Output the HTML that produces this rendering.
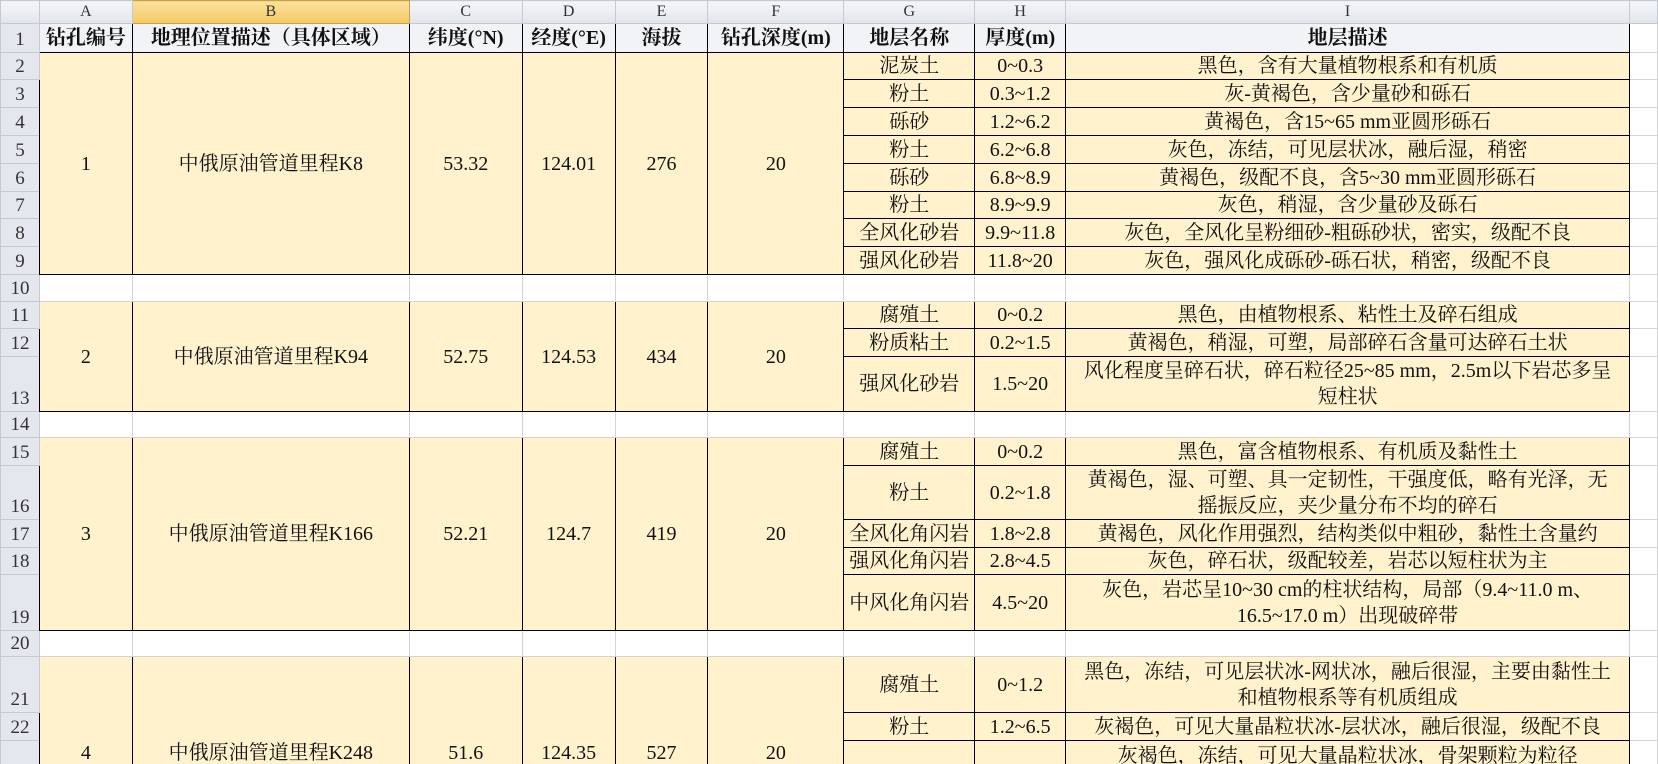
<!DOCTYPE html>
<html style="overflow:hidden;height:764px"><head><meta charset="utf-8"><style>
html,body{margin:0;width:1658px;height:764px;overflow:hidden;background:#fff;font-family:"Liberation Serif","Noto Serif CJK SC",serif;}
#wrap{position:relative;width:1658px;height:764px;overflow:hidden;}
table{border-collapse:collapse;table-layout:fixed;position:absolute;left:0;top:0;}
td{padding:0;text-align:center;vertical-align:middle;font-size:20px;color:#111;white-space:nowrap;overflow:hidden;line-height:26px;border:1px solid #d4d4d4;}
td.ch{background:linear-gradient(#f4f6f9,#e1e5eb);border:1px solid #c5cad2;color:#333;font-size:16px;line-height:18px;}
td.chs{background:linear-gradient(#fbe3a0,#f5c862);border:1px solid #c9a04a;color:#333;font-size:16px;line-height:18px;}
td.rh{background:#e4e8ee;border:1px solid #c5cad2;color:#333;font-size:19px;vertical-align:bottom;line-height:24px;}
td.h{background:#f2f3f6;font-weight:bold;border:1px solid #000;}
td.d{background:#fff2cc;border:1px solid #000;}
td.e{background:#fff;}
</style></head><body><div id="wrap">
<table>
<colgroup><col style="width:39px"><col style="width:93px"><col style="width:277px"><col style="width:113px"><col style="width:93px"><col style="width:93px"><col style="width:136px"><col style="width:131px"><col style="width:91px"><col style="width:564px"><col style="width:28px"></colgroup>
<tr style="height:23px"><td class="ch"></td><td class="ch">A</td><td class="chs">B</td><td class="ch">C</td><td class="ch">D</td><td class="ch">E</td><td class="ch">F</td><td class="ch">G</td><td class="ch">H</td><td class="ch">I</td><td class="ch"></td></tr>
<tr style="height:29px"><td class="rh">1</td><td class="h">钻孔编号</td><td class="h">地理位置描述（具体区域）</td><td class="h">纬度(°N)</td><td class="h">经度(°E)</td><td class="h">海拔</td><td class="h">钻孔深度(m)</td><td class="h">地层名称</td><td class="h">厚度(m)</td><td class="h">地层描述</td><td class="e"></td></tr>
<tr style="height:27px"><td class="rh">2</td><td class="d" rowspan="8">1</td><td class="d" rowspan="8">中俄原油管道里程K8</td><td class="d" rowspan="8">53.32</td><td class="d" rowspan="8">124.01</td><td class="d" rowspan="8">276</td><td class="d" rowspan="8">20</td><td class="d">泥炭土</td><td class="d">0~0.3</td><td class="d">黑色，含有大量植物根系和有机质</td><td class="e"></td></tr>
<tr style="height:28px"><td class="rh">3</td><td class="d">粉土</td><td class="d">0.3~1.2</td><td class="d">灰-黄褐色，含少量砂和砾石</td><td class="e"></td></tr>
<tr style="height:28px"><td class="rh">4</td><td class="d">砾砂</td><td class="d">1.2~6.2</td><td class="d">黄褐色，含15~65 mm亚圆形砾石</td><td class="e"></td></tr>
<tr style="height:28px"><td class="rh">5</td><td class="d">粉土</td><td class="d">6.2~6.8</td><td class="d">灰色，冻结，可见层状冰，融后湿，稍密</td><td class="e"></td></tr>
<tr style="height:28px"><td class="rh">6</td><td class="d">砾砂</td><td class="d">6.8~8.9</td><td class="d">黄褐色，级配不良，含5~30 mm亚圆形砾石</td><td class="e"></td></tr>
<tr style="height:27px"><td class="rh">7</td><td class="d">粉土</td><td class="d">8.9~9.9</td><td class="d">灰色，稍湿，含少量砂及砾石</td><td class="e"></td></tr>
<tr style="height:28px"><td class="rh">8</td><td class="d">全风化砂岩</td><td class="d">9.9~11.8</td><td class="d">灰色，全风化呈粉细砂-粗砾砂状，密实，级配不良</td><td class="e"></td></tr>
<tr style="height:28px"><td class="rh">9</td><td class="d">强风化砂岩</td><td class="d">11.8~20</td><td class="d">灰色，强风化成砾砂-砾石状，稍密，级配不良</td><td class="e"></td></tr>
<tr style="height:27px"><td class="rh">10</td><td class="e"></td><td class="e"></td><td class="e"></td><td class="e"></td><td class="e"></td><td class="e"></td><td class="e"></td><td class="e"></td><td class="e"></td><td class="e"></td></tr>
<tr style="height:27px"><td class="rh">11</td><td class="d" rowspan="3">2</td><td class="d" rowspan="3">中俄原油管道里程K94</td><td class="d" rowspan="3">52.75</td><td class="d" rowspan="3">124.53</td><td class="d" rowspan="3">434</td><td class="d" rowspan="3">20</td><td class="d">腐殖土</td><td class="d">0~0.2</td><td class="d">黑色，由植物根系、粘性土及碎石组成</td><td class="e"></td></tr>
<tr style="height:28px"><td class="rh">12</td><td class="d">粉质粘土</td><td class="d">0.2~1.5</td><td class="d">黄褐色，稍湿，可塑，局部碎石含量可达碎石土状</td><td class="e"></td></tr>
<tr style="height:55px"><td class="rh">13</td><td class="d">强风化砂岩</td><td class="d">1.5~20</td><td class="d">风化程度呈碎石状，碎石粒径25~85 mm，2.5m以下岩芯多呈<br>短柱状</td><td class="e"></td></tr>
<tr style="height:26px"><td class="rh">14</td><td class="e"></td><td class="e"></td><td class="e"></td><td class="e"></td><td class="e"></td><td class="e"></td><td class="e"></td><td class="e"></td><td class="e"></td><td class="e"></td></tr>
<tr style="height:28px"><td class="rh">15</td><td class="d" rowspan="5">3</td><td class="d" rowspan="5">中俄原油管道里程K166</td><td class="d" rowspan="5">52.21</td><td class="d" rowspan="5">124.7</td><td class="d" rowspan="5">419</td><td class="d" rowspan="5">20</td><td class="d">腐殖土</td><td class="d">0~0.2</td><td class="d">黑色，富含植物根系、有机质及黏性土</td><td class="e"></td></tr>
<tr style="height:54px"><td class="rh">16</td><td class="d">粉土</td><td class="d">0.2~1.8</td><td class="d">黄褐色，湿、可塑、具一定韧性，干强度低，略有光泽，无<br>摇振反应，夹少量分布不均的碎石</td><td class="e"></td></tr>
<tr style="height:28px"><td class="rh">17</td><td class="d">全风化角闪岩</td><td class="d">1.8~2.8</td><td class="d">黄褐色，风化作用强烈，结构类似中粗砂，黏性土含量约</td><td class="e"></td></tr>
<tr style="height:27px"><td class="rh">18</td><td class="d">强风化角闪岩</td><td class="d">2.8~4.5</td><td class="d">灰色，碎石状，级配较差，岩芯以短柱状为主</td><td class="e"></td></tr>
<tr style="height:56px"><td class="rh">19</td><td class="d">中风化角闪岩</td><td class="d">4.5~20</td><td class="d">灰色，岩芯呈10~30 cm的柱状结构，局部（9.4~11.0 m、<br>16.5~17.0 m）出现破碎带</td><td class="e"></td></tr>
<tr style="height:26px"><td class="rh">20</td><td class="e"></td><td class="e"></td><td class="e"></td><td class="e"></td><td class="e"></td><td class="e"></td><td class="e"></td><td class="e"></td><td class="e"></td><td class="e"></td></tr>
<tr style="height:56px"><td class="rh">21</td><td class="d" rowspan="3">4</td><td class="d" rowspan="3">中俄原油管道里程K248</td><td class="d" rowspan="3">51.6</td><td class="d" rowspan="3">124.35</td><td class="d" rowspan="3">527</td><td class="d" rowspan="3">20</td><td class="d">腐殖土</td><td class="d">0~1.2</td><td class="d">黑色，冻结，可见层状冰-网状冰，融后很湿，主要由黏性土<br>和植物根系等有机质组成</td><td class="e"></td></tr>
<tr style="height:28px"><td class="rh">22</td><td class="d">粉土</td><td class="d">1.2~6.5</td><td class="d">灰褐色，可见大量晶粒状冰-层状冰，融后很湿，级配不良</td><td class="e"></td></tr>
<tr style="height:108px"><td class="rh">23</td><td class="d">砾砂</td><td class="d">6.5~9.0</td><td class="d">灰褐色，冻结，可见大量晶粒状冰，骨架颗粒为粒径<br>2~20 mm的砾石，级配不良，融后很湿，<br>含少量粉土，稍密<br>&nbsp;</td><td class="e"></td></tr>
</table>
</div></body></html>
